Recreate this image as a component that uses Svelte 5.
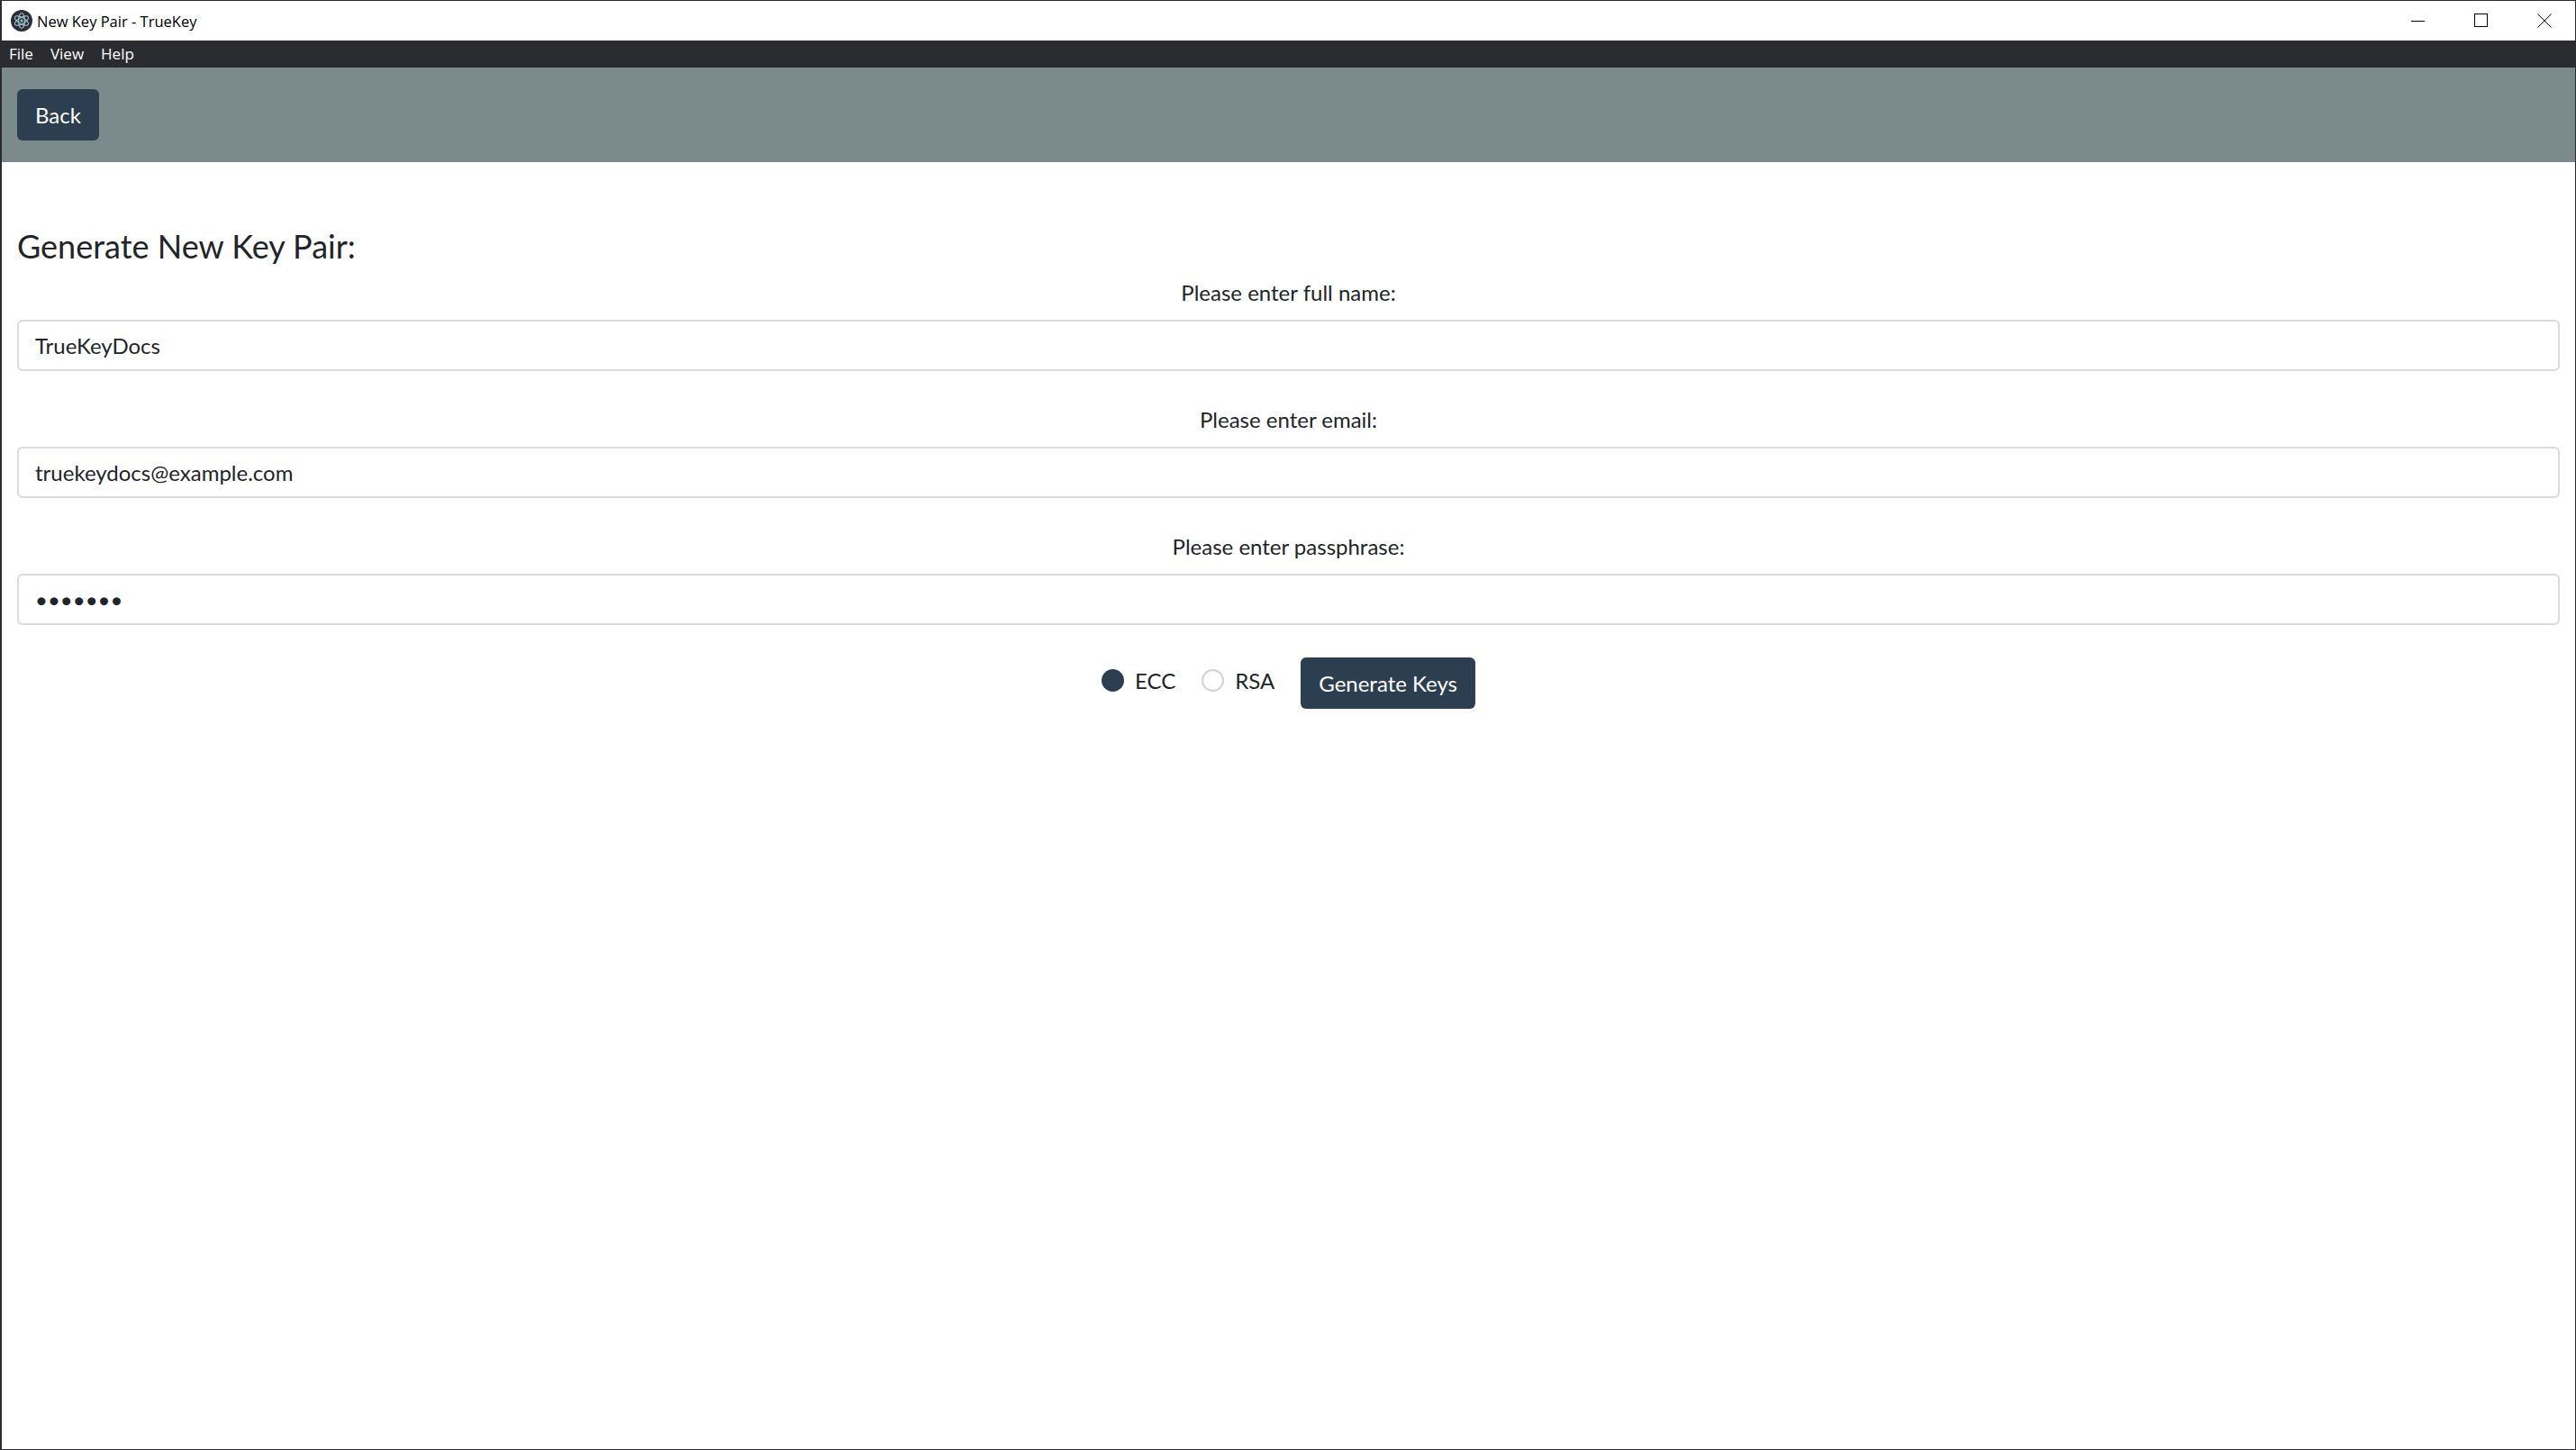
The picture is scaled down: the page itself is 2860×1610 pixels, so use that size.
<script>
  const fields = [
    { label: 'Please enter full name:', value: 'TrueKeyDocs', type: 'text' },
    { label: 'Please enter email:', value: 'truekeydocs@example.com', type: 'text' },
    { label: 'Please enter passphrase:', value: 'abcdefg', type: 'password' }
  ];
  let algo = 'ECC';
</script>

<div class="window">
  <header class="titlebar">
    <svg class="appicon" viewBox="0 0 24 24" aria-hidden="true">
      <circle cx="12" cy="12" r="12" fill="#2b2e3a" />
      <g fill="none" stroke="#9fc3cc" stroke-width="1.1">
        <ellipse cx="12" cy="12" rx="8.5" ry="3.4" transform="rotate(30 12 12)" />
        <ellipse cx="12" cy="12" rx="8.5" ry="3.4" transform="rotate(90 12 12)" />
        <ellipse cx="12" cy="12" rx="8.5" ry="3.4" transform="rotate(150 12 12)" />
      </g>
      <circle cx="12" cy="12" r="1.5" fill="#9fc3cc" />
    </svg>
    <span class="title">New Key Pair - TrueKey</span>
    <div class="controls">
      <svg width="16" height="16" viewBox="0 0 16 16" aria-hidden="true"><path d="M0 8.5h15" stroke="#000" fill="none" /></svg>
      <svg width="16" height="16" viewBox="0 0 16 16" aria-hidden="true"><rect x="0.5" y="0.5" width="14" height="14" stroke="#000" fill="none" /></svg>
      <svg width="16" height="16" viewBox="0 0 16 16" aria-hidden="true"><path d="M0.5 0.5l15 15M15.5 0.5l-15 15" stroke="#000" fill="none" /></svg>
    </div>
  </header>

  <nav class="menubar">
    <span>File</span>
    <span>View</span>
    <span>Help</span>
  </nav>

  <div class="toolbar">
    <button class="btn">Back</button>
  </div>

  <main class="content">
    <h4>Generate New Key Pair:</h4>
    {#each fields as f}
      <div class="field">
        <label>
          <span class="label">{f.label}</span>
          <input type={f.type} value={f.value} />
        </label>
      </div>
    {/each}
    <div class="actions">
      <label class="radio">
        <input type="radio" name="algo" value="ECC" bind:group={algo} />
        <span>ECC</span>
      </label>
      <label class="radio">
        <input type="radio" name="algo" value="RSA" bind:group={algo} />
        <span>RSA</span>
      </label>
      <button class="btn">Generate Keys</button>
    </div>
  </main>
</div>

<style>
  :global(body) {
    margin: 0;
    background: #fff;
  }
  .window {
    box-sizing: border-box;
    width: 2860px;
    height: 1610px;
    border: 1px solid #2b2c30;
    border-width: 1px 1px 1px 2px;
    display: flex;
    flex-direction: column;
    font-family: Lato, sans-serif;
    color: #212529;
    overflow: hidden;
  }
  .titlebar {
    height: 44px;
    flex: none;
    display: flex;
    align-items: center;
    padding-left: 10px;
    background: #fff;
  }
  .appicon {
    width: 24px;
    height: 24px;
    margin-right: 5px;
  }
  .title {
    font-family: "Open Sans", sans-serif;
    font-size: 16.5px;
    color: #000;
  }
  .controls {
    margin-left: auto;
    display: flex;
    gap: 54px;
    margin-right: 26px;
    align-items: center;
  }
  .menubar {
    height: 30px;
    flex: none;
    box-sizing: border-box;
    background: #2b2c30;
    color: #fff;
    display: flex;
    align-items: center;
    gap: 19px;
    padding: 0 0 2px 8px;
    font-family: "Open Sans", sans-serif;
    font-size: 17px;
  }
  .toolbar {
    height: 105px;
    flex: none;
    box-sizing: border-box;
    background: #7b8a8b;
    padding: 24px 17px;
  }
  .btn {
    height: 57px;
    box-sizing: border-box;
    padding: 0 20px;
    border: 0;
    border-radius: 6px;
    background: #2c3e50;
    color: #fff;
    font-family: Lato, sans-serif;
    font-size: 24px;
    line-height: 36px;
  }
  .content {
    padding: 66px 17px 0;
    flex: 1;
  }
  h4 {
    margin: 0 0 7px;
    font-size: 36px;
    font-weight: 400;
    line-height: 54px;
    color: #212529;
  }
  .field {
    margin-bottom: 36px;
  }
  .field label {
    display: block;
    text-align: center;
    font-size: 24px;
    line-height: 36px;
  }
  .label {
    display: block;
    margin-bottom: 12px;
  }
  .field input {
    display: block;
    box-sizing: border-box;
    width: 100%;
    height: 57px;
    padding: 0 18px;
    border: 2px solid #dadbe0;
    border-radius: 6px;
    background: #fff;
    color: #212529;
    font-family: Lato, sans-serif;
    font-size: 24px;
    outline: none;
  }
  .actions {
    display: flex;
    justify-content: center;
    align-items: center;
  }
  .radio {
    display: flex;
    align-items: center;
    gap: 12px;
    margin-right: 29px;
    font-size: 24px;
    line-height: 36px;
    position: relative;
    top: -3px;
  }
  .radio input {
    appearance: none;
    box-sizing: border-box;
    width: 25px;
    height: 25px;
    margin: 0;
    border: 2px solid #d2d2d2;
    border-radius: 50%;
    background: #fff;
  }
  .radio input:checked {
    background: #2c3e50;
    border-color: #2c3e50;
  }
</style>
